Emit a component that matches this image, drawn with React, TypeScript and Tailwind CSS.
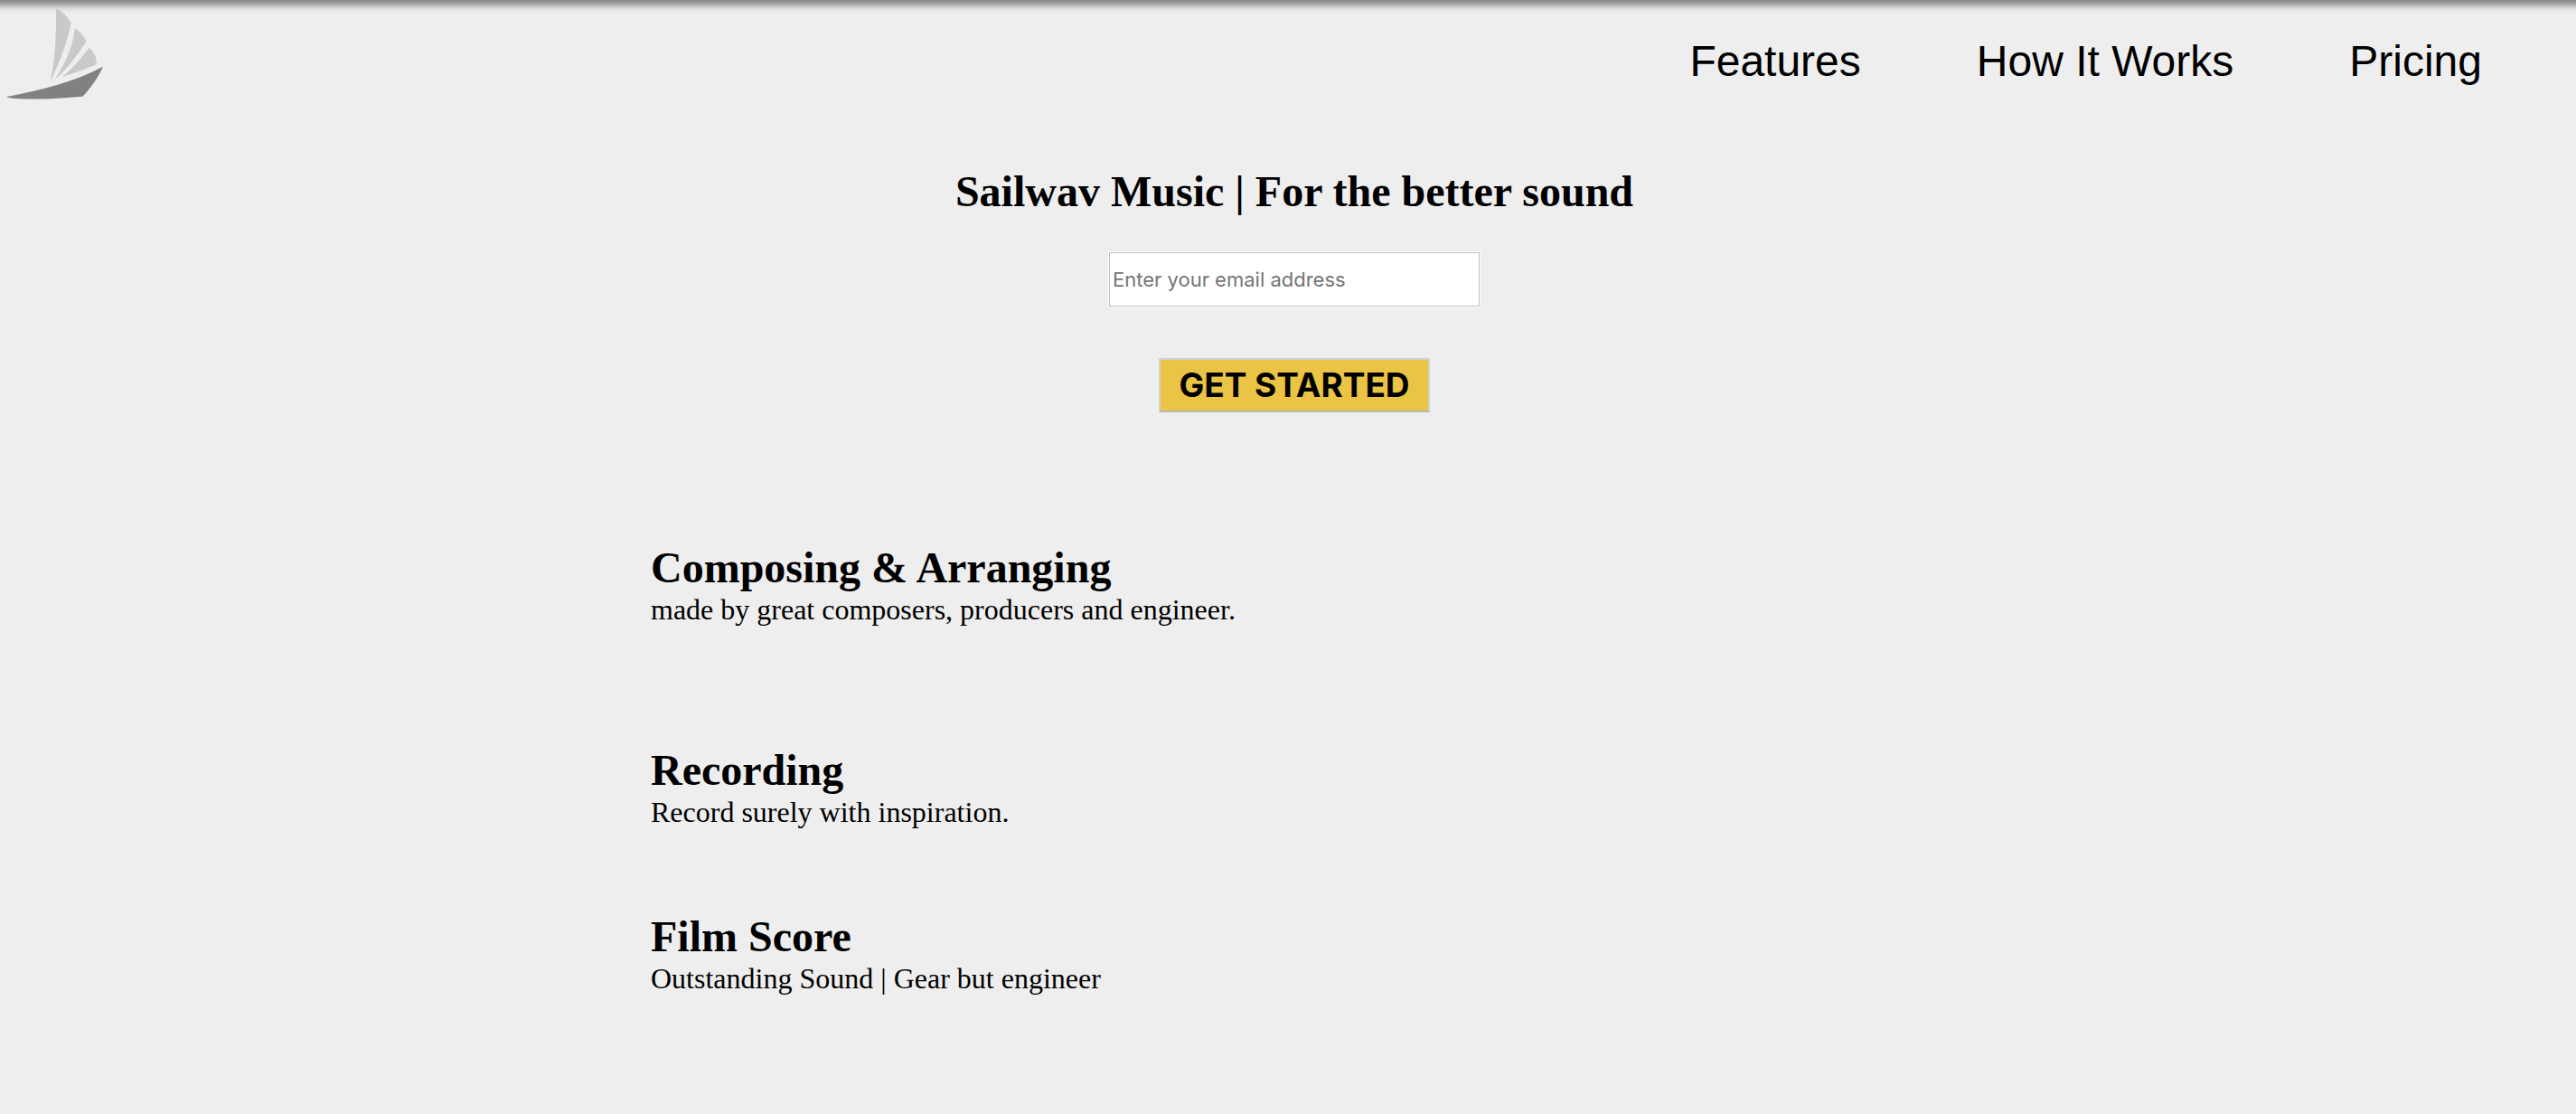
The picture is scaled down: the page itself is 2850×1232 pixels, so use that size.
const links = ["Features", "How It Works", "Pricing"];

const services = [
  {
    title: "Composing & Arranging",
    text: "made by great composers, producers and engineer.",
    space: "mb-[132px]",
  },
  { title: "Recording", text: "Record surely with inspiration.", space: "mb-[92px]" },
  { title: "Film Score", text: "Outstanding Sound | Gear but engineer", space: "" },
];

function Logo() {
  return (
    <svg viewBox="0 0 390 360" className="h-[120px] w-[130px]" role="img" aria-label="Sailwav Music">
      <g fill="#c9c9c9">
        <path d="M186 29 C204 33 225 56 236 76 C225 136 198 209 167 269 C184 190 187 110 186 29Z" />
        <path d="M249 94 C265 104 280 121 286 138 C256 184 222 231 183 262 C216 214 242 155 249 94Z" />
        <path d="M295 159 C312 171 323 192 320 214 C284 228 244 245 206 255 C240 228 269 195 295 159Z" />
      </g>
      <path
        fill="#818181"
        d="M23 321 C130 300 246 273 342 221 C325 257 302 292 274 320 C190 327 90 334 23 323Z"
      />
    </svg>
  );
}

export default function App() {
  return (
    <div className="min-h-screen bg-[#eeeeee] font-['Liberation_Serif',serif] text-black">
      <header className="flex items-start justify-between bg-[linear-gradient(to_bottom,#8a8a8a_0px,#999999_3px,#bababa_6px,#d8d8d8_9px,#e9e9e9_12px,#eeeeee_15px)] pr-[104px]">
        <a href="#home">
          <Logo />
        </a>
        <nav className="flex gap-32 pt-10 font-['Liberation_Sans',sans-serif] text-5xl leading-[56px]">
          {links.map((label) => (
            <a key={label} href="#services">
              {label}
            </a>
          ))}
        </nav>
      </header>

      <main className="pl-[14px]">
        <form className="flex flex-col items-center pt-16" onSubmit={(e) => e.preventDefault()}>
          <h1 className="text-5xl leading-[56px] font-bold">Sailwav Music | For the better sound</h1>
          <input
            type="email"
            aria-label="Email address"
            placeholder="Enter your email address"
            className="mt-[38px] h-[62px] w-[412px] border border-white bg-white px-1 font-['Inter',sans-serif] text-[22px] text-black outline -outline-offset-2 outline-[#bfbfbf] placeholder:text-[#757575]"
          />
          <button
            type="submit"
            className="mt-14 h-[60px] w-[300px] border-2 border-[#d2d2d2] border-b-[#b8b8b8] bg-[#ebc445] font-['Inter',sans-serif] text-[37px] leading-[56px] font-bold"
          >
            GET STARTED
          </button>
        </form>

        <section id="services" className="mx-auto max-w-[1424px] pt-36">
          {services.map(({ title, text, space }) => (
            <article key={title} className={space}>
              <h2 className="text-5xl leading-[56px] font-bold">{title}</h2>
              <p className="text-[32px] leading-9">{text}</p>
            </article>
          ))}
        </section>
      </main>
    </div>
  );
}
